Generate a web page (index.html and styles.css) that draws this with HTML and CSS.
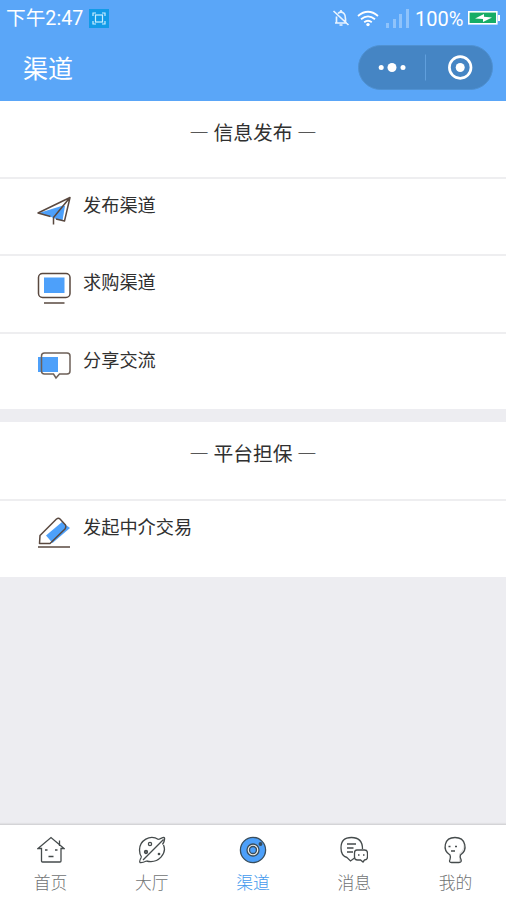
FILE: index.html
```html
<!DOCTYPE html>
<html lang="zh-CN">
<head>
<meta charset="utf-8">
<title>渠道</title>
<link rel="stylesheet" href="styles.css">
</head>
<body>
<header class="header">
  <div class="status">
    <span class="time">下午2:47</span>
    <svg class="shot" width="20" height="19" viewBox="0 0 20 19"><rect width="20" height="19" fill="#129be8"/><g fill="none" stroke="#c9efff" stroke-width="1.2"><rect x="6.500" y="6" width="7" height="7"/><path d="M4 7V4h3M13 4h3v3M16 12v3h-3M7 15H4v-3"/></g></svg>
    <span class="spacer"></span>
    <svg class="bell" width="18" height="18" viewBox="0 0 18 18" fill="none" stroke="#e9f4ff" stroke-width="1.700"><path d="M3 14h12M4.500 13.500V7.500M6 4.500Q9 1.500 12 4.500Q13.500 6 13.500 10v4M9 1v2M7.500 16h3M1.500 2l15 14"/></svg>
    <svg class="wifi" width="22" height="17" viewBox="0 0 22 17" fill="none" stroke="#fff" stroke-width="1.8"><path d="M1 6Q11-2.500 21 6M4 9.300Q11 3.500 18 9.300M7.200 12.300Q11 9.300 14.800 12.300"/><circle cx="11" cy="14.600" r="1.700" fill="#fff" stroke="none"/></svg>
    <svg class="signal" width="23" height="19" viewBox="0 0 23 19" fill="#8fc3fb"><path d="M0 14h3v5H0zM7 10h3v9H7zM13 5h3v14h-3zM20 0h3v19h-3z"/></svg>
    <span class="percent">100%</span>
    <svg class="battery" width="32" height="14" viewBox="0 0 32 14"><rect x=".8" y=".8" width="28" height="12" fill="#16ad66" stroke="#fff" stroke-width="1.600"/><path d="M30 4h2v6h-2z" fill="#fff"/><path d="M7 7.500l9-4.500v2.800l8 .7-9 4.500V8z" fill="#fff"/></svg>
  </div>
  <div class="nav">
    <h1 class="title">渠道</h1>
    <div class="capsule">
      <svg width="134" height="44" viewBox="0 0 134 44"><g fill="#fff"><circle cx="22.200" cy="21.500" r="2.500"/><circle cx="33" cy="21.500" r="4.500"/><circle cx="44" cy="21.500" r="2.500"/><circle cx="101.200" cy="21.500" r="4.500"/></g><path d="M66.500 8.500v26" stroke="#609fdd"/><circle cx="101.200" cy="21.500" r="10.800" fill="none" stroke="#fff" stroke-width="2.700"/></svg>
    </div>
  </div>
</header>
<main class="content">
  <section class="group">
    <h2 class="heading">— 信息发布 —</h2>
    <div class="row">
      <svg class="icon" width="36" height="36" viewBox="0 0 36 36"><path d="M3 20L27 12.500 29 13 26.500 27.500 20 26 14 23.500z" fill="#4da0fa"/><path d="M14.500 23.500L2 20 34 4.500 28.500 28 20 26M34 4.500L17.500 24.500v7" fill="none" stroke="#59483f" stroke-width="1.500" stroke-linejoin="round"/></svg>
      <span>发布渠道</span>
    </div>
    <div class="row">
      <svg class="icon" width="36" height="36" viewBox="0 0 36 36"><rect x="8" y="7.500" width="20.500" height="15.500" fill="#4da0fa"/><g fill="none" stroke="#59483f" stroke-width="1.500"><rect x="2.500" y="3.500" width="31.500" height="24" rx="4"/><path d="M8 33h20.500"/></g></svg>
      <span>求购渠道</span>
    </div>
    <div class="row">
      <svg class="icon" width="36" height="36" viewBox="0 0 36 36"><rect x="2" y="9" width="20" height="15" fill="#4da0fa"/><path d="M8.500 5h22.500Q34 5 34 8v15q0 3-3 3H23.500l-3.500 4-2.500-4H8.500q-3 0-3-3V8q0-3 3-3z" fill="none" stroke="#6d6058" stroke-width="1.500"/></svg>
      <span>分享交流</span>
    </div>
  </section>
  <section class="group">
    <h2 class="heading">— 平台担保 —</h2>
    <div class="row">
      <svg class="icon" width="36" height="36" viewBox="0 0 36 36"><path d="M10 20.500L26 7l8 6-17.500 15z" fill="#4da0fa"/><g fill="none" stroke="#59483f" stroke-width="1.500" stroke-linejoin="round"><path d="M3.500 28.500L4 20.500 20.500 4q2-1.500 3.500 0l5.500 6q1 2-.5 4L14 28.500z"/><path d="M2 32h32"/></g></svg>
      <span>发起中介交易</span>
    </div>
  </section>
</main>
<nav class="tabs">
  <div class="tab">
    <svg width="28" height="28" viewBox="0 0 28 28" fill="none" stroke="#454b4c" stroke-width="1.300"><path d="M4.500 12.500H1L14 1.500l13 11h-3V25q0 1-1 1H5.500q-1 0-1-1zM22.500 10V4.500"/><path d="M8 14h2.500M18 14h2.500M11.500 20.500h5" stroke-width="1.600"/></svg>
    <span>首页</span>
  </div>
  <div class="tab">
    <svg width="28" height="28" viewBox="0 0 28 28" fill="none" stroke="#454b4c" stroke-width="1.300"><path d="M20.500 3.500C12-2 1.500 4.500 1.500 14q0 4 2 7M25.500 9C29 17 21 28 8.500 25M20.500 3.500Q26 .5 26.500 2 27 5 24.500 8.500M3.500 21Q1 25 2 26.500 4 27 8.500 25M25.500 3.500L5 24"/><circle cx="12" cy="8" r="1.600"/><circle cx="8" cy="16" r="1.500" fill="#777"/><circle cx="21" cy="18" r=".7"/></svg>
    <span>大厅</span>
  </div>
  <div class="tab active">
    <svg width="28" height="28" viewBox="0 0 28 28" stroke="#394d5b" stroke-width="1.300"><circle cx="14" cy="14" r="12.600" fill="#4da0fa"/><circle cx="14" cy="14" r="6" fill="#f2eee8"/><circle cx="14" cy="14" r="3.500" fill="#4da0fa"/><circle cx="21.500" cy="8" r="1.300" fill="#394d5b"/></svg>
    <span>渠道</span>
  </div>
  <div class="tab">
    <svg width="28" height="28" viewBox="0 0 28 28" fill="none" stroke="#454b4c" stroke-width="1.300"><path d="M14.500 22L10.500 25 7 21.500Q1 20 1 12 1 1.500 11.500 1.500q11 0 11 11.500M7 8h9M7 12h6.500M7 16h6"/><path d="M17 14h7.500q3 0 3 3v4q0 3-3 3l-1.500 2-2.500-2H17.500q-3 0-3-3v-4q0-3 2.500-3z" fill="#fff"/><path d="M18 19h1.500M23 19h1.500" stroke-width="1.600"/></svg>
    <span>消息</span>
  </div>
  <div class="tab">
    <svg width="28" height="28" viewBox="0 0 28 28"><path d="M21 4q4 8-3 14v8h2q1-2-1-7 8-8 2-15z" fill="#ddd"/><path d="M9 19C1 14 3 1.500 14 1.500S27 14 19.500 19q-1 2 .5 4.500 1 3-2 3H10.500q-3 0-1.500-3 1-2 0-4.500zM7.500 10.500h2M14 10.500h2M10 15h4" fill="none" stroke="#454b4c" stroke-width="1.300"/></svg>
    <span>我的</span>
  </div>
</nav>
</body>
</html>
```
FILE: styles.css
```css
* { box-sizing: border-box; }
body {
  margin: 0;
  height: 900px;
  display: flex;
  flex-direction: column;
  overflow: hidden;
  background: #ededf1;
  color: #303030;
  font-family: "Noto Sans CJK SC", sans-serif;
}
svg { display: block; flex: none; }
.header { height: 101px; flex: none; background: #5aa6f8; color: #fff; }
.status { display: flex; align-items: center; height: 36px; padding: 0 6px 0 6px; }
.time, .percent { font-family: Roboto, "Noto Sans CJK SC", sans-serif; font-size: 20px; line-height: 36px; white-space: nowrap; }
.time { width: 83px; padding-top: 2px; font-size: 19.700px; }
.spacer { flex: 1; }
.bell { margin-right: 7px; }
.wifi { margin-right: 7px; }
.signal { margin-right: 6px; }
.percent { width: 53px; padding-top: 1px; }
.nav { display: flex; justify-content: space-between; padding: 9px 13px 0 23px; }
.title { margin: 0; font-size: 25px; font-weight: 400; line-height: 44px; }
.capsule { width: 135px; height: 45px; border: 1px solid #4f91d2; border-radius: 23px; background: #4585c4; overflow: hidden; }
.content { flex: 1; }
.group { margin-bottom: 13px; background: #fff; }
.heading { height: 76px; margin: 0; padding-top: 16px; font-size: 19.800px; font-weight: 400; line-height: 30px; text-align: center; }
.group + .group .heading { height: 77px; }
.row { display: flex; height: 77.400px; border-top: 2px solid #eeeef0; padding: 14px 36px 0; gap: 11px; font-size: 18.200px; line-height: 22px; }
.tabs { display: flex; flex: none; height: 76px; border-top: 1px solid #d4d4d7; background: #fff; box-shadow: 0 -1px 1px #e1e1e4; }
.tab { flex: 1; display: flex; flex-direction: column; align-items: center; padding-top: 11px; color: #6f7273; font-size: 16.800px; line-height: 24px; font-weight: 300; }
.tab span { margin-top: 6px; }
.active { color: #4299ed; }
```
